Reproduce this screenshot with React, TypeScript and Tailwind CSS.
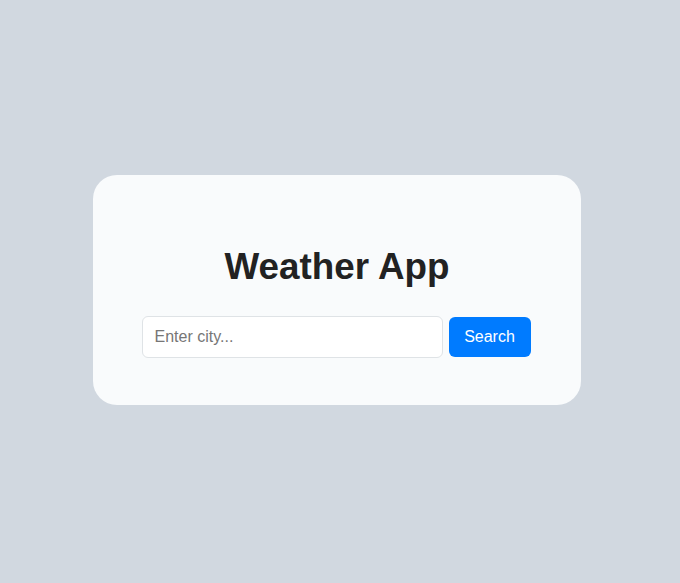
export default function App() {
  return (
    <div
      className="min-h-screen w-full bg-[#d1d8e0] flex items-center justify-center"
      style={{ fontFamily: '"Liberation Sans", Arial, sans-serif' }}
    >
      <div className="w-[488px] mr-[6px] mb-[4px] bg-[#f9fbfc] rounded-[24px] pt-[71px] pb-[47px] flex flex-col items-center">
        <h1 className="text-[36.8px] leading-[41px] font-bold text-[#222222]">
          Weather App
        </h1>
        <div className="mt-[29px] mr-[2px] flex items-center gap-[6px]">
          <input
            type="text"
            placeholder="Enter city..."
            className="w-[301px] h-[42px] px-[12px] text-[16px] bg-white border border-[#dfe3e6] rounded-[6px] text-[#222] placeholder:text-[#767676] outline-none"
          />
          <button className="w-[82px] h-[40px] bg-[#007bff] text-white text-[16px] rounded-[6px]">
            Search
          </button>
        </div>
      </div>
    </div>
  );
}
